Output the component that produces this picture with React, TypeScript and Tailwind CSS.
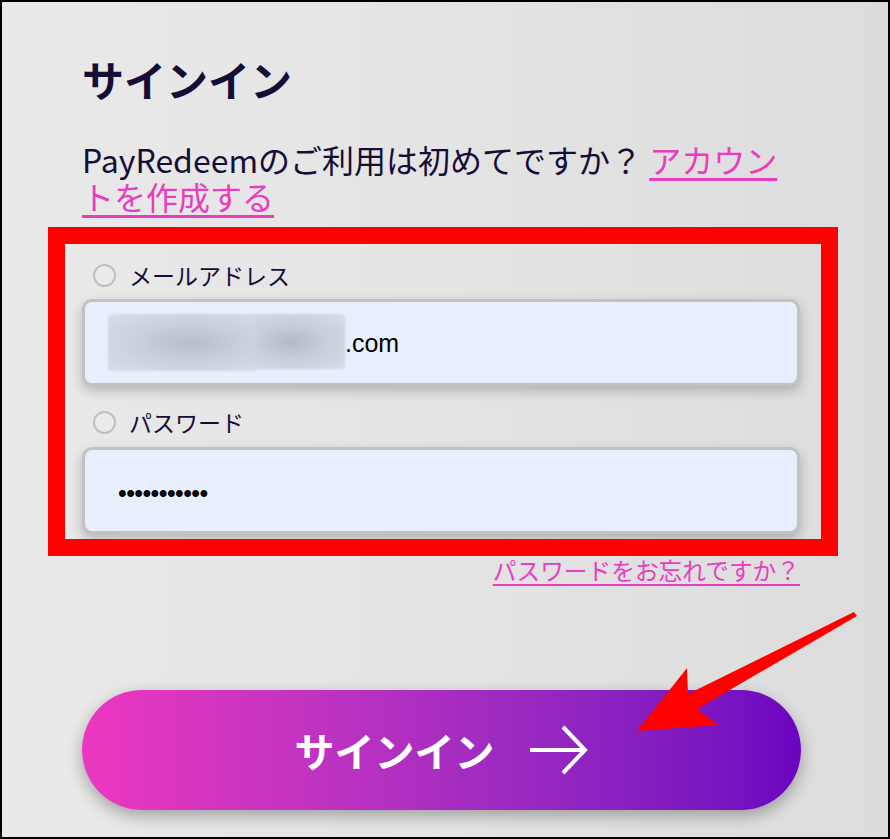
import React from "react";

export default function App() {
  return (
    <div className="relative w-[890px] h-[839px] border-2 border-black bg-gradient-to-r from-[#e9e9e9] via-[#e4e4e4] to-[#dcdcdc] overflow-hidden font-['Noto_Sans_CJK_JP','Noto_Sans',sans-serif] text-[#160d36]">
      <div className="flex flex-col pl-[80px] pt-[52px] w-[800px]">
        <h1 className="text-[42px] leading-[50px] font-bold">サインイン</h1>
        <p className="mt-[37px] text-[32px] leading-[37px] whitespace-nowrap">
          PayRedeemのご利用は初めてですか？{" "}
          <a className="text-[#e93cc0] underline decoration-[3px] underline-offset-[5px]">
            アカウン
            <br />
            トを作成する
          </a>
        </p>

        <div className="mt-[45px] flex flex-col">
          <div className="flex items-center h-[30px] mb-[9px] pl-[11px] gap-[13px]">
            <span className="w-[23px] h-[23px] rounded-full border-2 border-[#bfbfbf] bg-[#ebebeb]" />
            <span className="text-[23px]">メールアドレス</span>
          </div>
          <div className="w-[718px] h-[87px] rounded-[10px] border-[3px] border-[#c2c2c2] bg-[#e7effd] shadow-[0_5px_12px_rgba(0,0,0,0.22)] flex items-center pl-[23px]">
            <div className="flex items-center">
              <div className="flex">
                <div className="w-[150px] h-[57px] rounded-sm bg-[radial-gradient(ellipse_at_55%_50%,#b6becb_0%,#c9d0db_45%,#d8dee8_100%)] blur-[1px]" />
                <div className="w-[90px] h-[55px] -ml-[3px] rounded-sm bg-[radial-gradient(ellipse_at_40%_50%,#b2bac7_0%,#c8cfda_45%,#d6dce6_100%)] blur-[1px]" />
              </div>
              <span className="font-['Liberation_Sans',Arial,sans-serif] text-[25px] text-black pt-[3px]">.com</span>
            </div>
          </div>

          <div className="flex items-center h-[30px] mt-[21px] mb-[10px] pl-[11px] gap-[13px]">
            <span className="w-[23px] h-[23px] rounded-full border-2 border-[#bfbfbf] bg-[#ebebeb]" />
            <span className="text-[23px]">パスワード</span>
          </div>
          <div className="w-[718px] h-[87px] rounded-[10px] border-[3px] border-[#c2c2c2] bg-[#e7effd] shadow-[0_5px_12px_rgba(0,0,0,0.22)] flex items-center pl-[33px] pt-[6px]">
            <span className="font-['Liberation_Sans',Arial,sans-serif] text-[25px] text-black tracking-[-0.6px]">•••••••••••</span>
          </div>

          <div className="mt-[21px] flex justify-end w-[718px]">
            <a className="text-[23.7px] leading-[30px] text-[#e93cc0] underline decoration-[2px] underline-offset-[4px]">
              パスワードをお忘れですか？
            </a>
          </div>

          <div className="mt-[105px] w-[719px] h-[120px] rounded-full bg-gradient-to-r from-[#ec37bf] to-[#6c03bf] shadow-[0_6px_16px_rgba(0,0,0,0.3)] flex items-center justify-center gap-[34px]">
            <span className="text-white text-[40px] font-bold leading-none">サインイン</span>
            <svg width="60" height="50" viewBox="0 0 60 50" fill="none">
              <path d="M1 25 H56" stroke="white" strokeWidth="4" />
              <path d="M34 2 L56 25 L34 48" stroke="white" strokeWidth="4" strokeLinejoin="miter" />
            </svg>
          </div>
        </div>
      </div>

      <div className="absolute left-[46px] top-[225px] w-[790px] h-[329px] border-[17px] border-[#ff0000]" />

      <svg className="absolute left-0 top-0" width="886" height="835" viewBox="2 2 886 835">
        <polygon
          points="637,731 687,668 688,694 854,612 857,616 697,709 718,725"
          fill="#ff0000"
        />
      </svg>
    </div>
  );
}
